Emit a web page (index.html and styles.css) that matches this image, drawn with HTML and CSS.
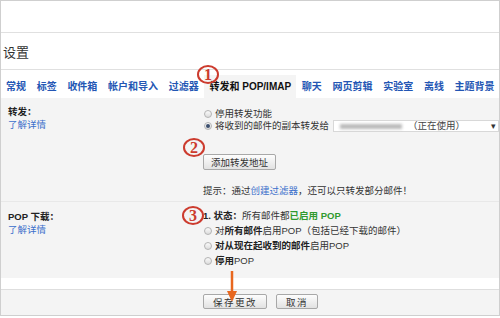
FILE: index.html
```html
<!DOCTYPE html>
<html lang="zh-CN">
<head>
    <meta charset="UTF-8">
    <meta name="viewport" content="width=device-width, initial-scale=1.0">
    <title>设置 - 转发和 POP/IMAP</title>
    <link rel="stylesheet" href="styles.css">
</head>
<body>

<div class="page">
    <div class="top"></div>
    <div class="title">设置</div>

    <div class="tabs">
        <a class="tab">常规</a>
        <a class="tab">标签</a>
        <a class="tab">收件箱</a>
        <a class="tab">帐户和导入</a>
        <a class="tab">过滤器</a>
        <span class="tab active">转发和 POP/IMAP</span>
        <a class="tab">聊天</a>
        <a class="tab">网页剪辑</a>
        <a class="tab">实验室</a>
        <a class="tab">离线</a>
        <a class="tab">主题背景</a>
    </div>

    <div class="content">
        <div class="section forward">
            <div class="label">
                <b>转发：</b><br>
                <a class="link">了解详情</a>
            </div>
            <div class="value">
                <div class="row"><span class="radio"></span>停用转发功能</div>
                <div class="row">
                    <span class="radio checked"></span>将收到的邮件的副本转发给
                    <span class="select">
                        <span class="blur"></span>
                        <span class="using">（正在使用）</span>
                        <span class="caret">▾</span>
                    </span>
                </div>
                <button class="btn add">添加转发地址</button>
                <div class="hint">提示：通过<a class="link">创建过滤器</a>，还可以只转发部分邮件！</div>
            </div>
        </div>

        <div class="section pop">
            <div class="label">
                <b>POP 下载：</b><br>
                <a class="link">了解详情</a>
            </div>
            <div class="value">
                <div class="status"><b>1. 状态：</b>所有邮件都<b class="on">已启用 POP</b></div>
                <div class="row"><span class="radio"></span>对<b>所有邮件</b>启用POP（包括已经下载的邮件）</div>
                <div class="row"><span class="radio"></span><b>对从现在起收到的邮件</b>启用POP</div>
                <div class="row"><span class="radio"></span><b>停用</b>POP</div>
            </div>
        </div>

        <div class="band"></div>

        <div class="actions">
            <button class="btn wide">保存更改</button>
            <button class="btn wide">取消</button>
        </div>
    </div>

    <!-- markers drawn over the screenshot -->
    <span class="mark m1">1</span>
    <span class="mark m2">2</span>
    <span class="mark m3">3</span>
    <svg class="arrow" width="12" height="32" viewBox="0 0 12 32">
        <line x1="6" y1="0" x2="6" y2="22" stroke="#e8671e" stroke-width="2.5"/>
        <polygon points="1,20 11,20 6,31" fill="#e8671e"/>
    </svg>
</div>

</body>
</html>
```

FILE: styles.css
```css
body {
    margin: 0;
    background-color: white;
    font-family: "Liberation Sans", "Noto Sans CJK SC", sans-serif;
    font-size: 9.5px;
    color: #333;
}
.page {
    position: relative;
    width: 500px;
    height: 316px;
    box-sizing: border-box;
    border: 1px solid #cfcfcf;
    overflow: hidden;
}
.top {
    height: 31px;
    border-bottom: 1px solid #e0e0e0;
}
.title {
    height: 36px;
    display: flex;
    align-items: center;
    padding-left: 2px;
    font-size: 13px;
    color: #333;
    border-bottom: 1px solid #e0e0e0;
}
.tabs {
    height: 28px;
    box-sizing: border-box;
    display: flex;
    gap: 10.7px;
    padding: 11px 0 0 5px;
    font-size: 10px;
    line-height: 12px;
    font-weight: bold;
    white-space: nowrap;
}
.tab {
    color: #2356b4;
}
.tab.active {
    color: #111;
    background-color: #f4f4f4;
    padding: 6px 5px 0;
    margin: -6px -5px 0;
}
.content {
    background-color: #f4f4f4;
}
.link {
    color: #3a6fcb;
}
.section {
    display: grid;
    grid-template-columns: 195px 1fr;
    padding-left: 7px;
}
.label {
    line-height: 13px;
}
.label b {
    color: #222;
}
.forward {
    padding: 7px 0 4px 7px;
}
.forward .value {
    margin-top: 3px;
}
.row {
    display: flex;
    align-items: center;
    line-height: 12px;
    white-space: nowrap;
}
.row b {
    color: #222;
}
.radio {
    width: 6px;
    height: 6px;
    margin: 0 3px 0 1px;
    border: 1px solid #b4b4b4;
    border-radius: 50%;
    background: linear-gradient(#fafafa, #dcdcdc);
    position: relative;
}
.radio.checked::after {
    content: "";
    position: absolute;
    left: 1px;
    top: 1px;
    width: 4px;
    height: 4px;
    border-radius: 50%;
    background-color: #3b4f6e;
}
.select {
    display: flex;
    align-items: center;
    width: 166px;
    height: 12px;
    box-sizing: border-box;
    margin-left: 4px;
    background-color: white;
    border: 1px solid #d8d8d8;
    position: relative;
}
.blur {
    width: 62px;
    height: 5px;
    margin: 0 6px 0 6px;
    background-color: #b9b9b9;
    filter: blur(1.5px);
}
.using {
    color: #444;
}
.caret {
    position: absolute;
    right: 2px;
    top: -1px;
    font-size: 9px;
    color: #333;
}
.btn {
    display: block;
    height: 16px;
    padding: 0 7px;
    font-family: inherit;
    font-size: 9.5px;
    color: #333;
    border: 1px solid #a8a8a8;
    border-radius: 2px;
    background: linear-gradient(#fdfdfd, #e2e2e2);
}
.add {
    margin-top: 22px;
}
.hint {
    margin-top: 15px;
    line-height: 12px;
}
.pop {
    border-top: 1px solid #e8e8e8;
    padding: 8px 0 10px 7px;
}
.status {
    margin-top: -1px;
    line-height: 14px;
    white-space: nowrap;
}
.status b {
    color: #222;
}
.status .on {
    color: #2f9a2f;
}
.pop .row {
    line-height: 15px;
}
.band {
    height: 11px;
    background-color: white;
    border-bottom: 1px solid #dedede;
}
.actions {
    display: flex;
    gap: 9px;
    height: 26px;
    box-sizing: border-box;
    padding: 4px 0 0 202px;
}
.wide {
    height: 15px;
    padding: 0 9px;
    letter-spacing: 1.5px;
}
.mark {
    position: absolute;
    width: 18px;
    height: 15px;
    border: 2px solid #cc3b2e;
    border-radius: 50%;
    color: #cc3b2e;
    font-family: "Liberation Serif", serif;
    font-size: 16px;
    font-weight: bold;
    line-height: 15px;
    text-align: center;
}
.m1 { left: 196px; top: 64px; }
.m2 { left: 182px; top: 137px; }
.m3 { left: 181px; top: 205px; }
.arrow {
    position: absolute;
    left: 225px;
    top: 270px;
}
```
